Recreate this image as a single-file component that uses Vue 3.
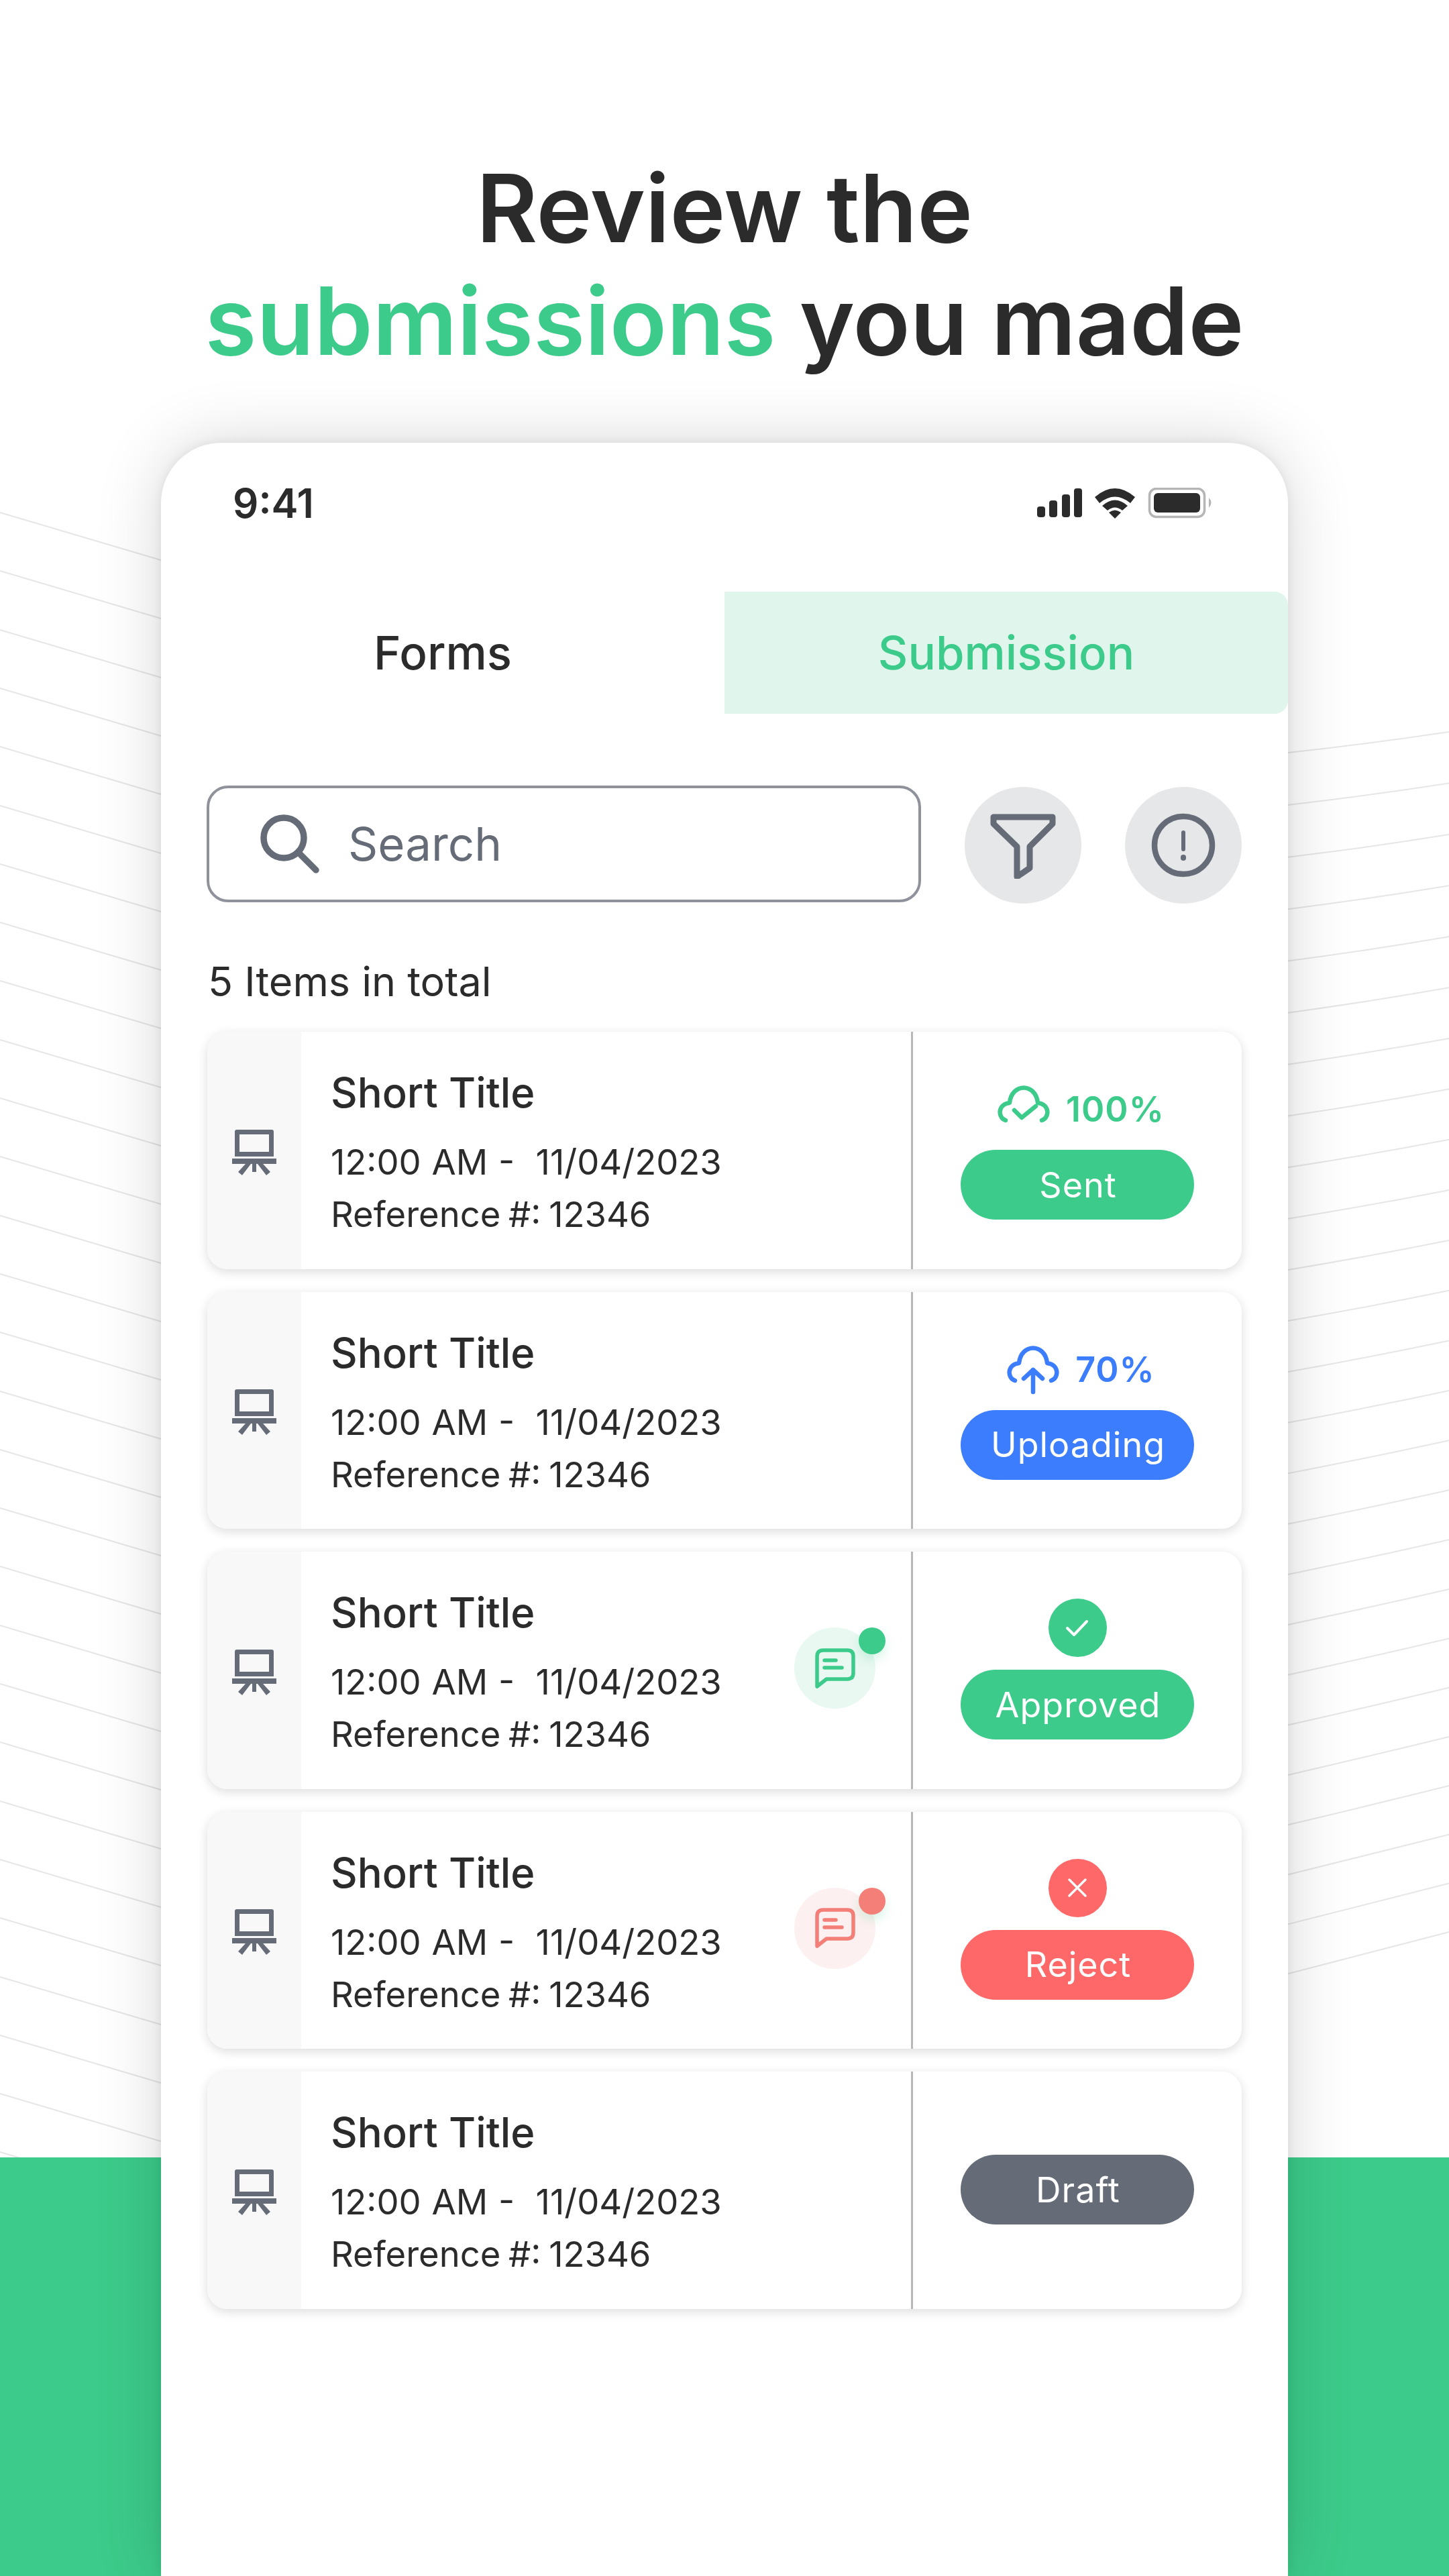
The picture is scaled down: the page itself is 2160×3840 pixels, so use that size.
<template>
  <div class="page">
    <svg class="bg-lines" width="2160" height="3216" viewBox="0 0 2160 3216">
      <line v-for="y in leftLines" :key="'l' + y" x1="0" :y1="y" x2="240" :y2="y + 71" />
      <path v-for="(d, i) in rightLines" :key="'r' + i" :d="d" />
    </svg>
    <div class="green-band"></div>

    <h1 class="headline">
      Review the<br />
      <span class="accent">submissions</span> you made
    </h1>

    <div class="phone">
      <div class="status-bar">
        <span class="clock">9:41</span>
        <svg class="status-icons" width="262" height="46" viewBox="0 0 262 46">
          <rect x="0" y="28" width="12" height="16" rx="4" fill="#2b2b2b" />
          <rect x="18" y="19" width="12" height="25" rx="4" fill="#2b2b2b" />
          <rect x="37" y="10" width="12" height="34" rx="4" fill="#2b2b2b" />
          <rect x="55" y="1" width="12" height="43" rx="4" fill="#2b2b2b" />
          <path d="M86 14 Q116 -12 146 14 L139 23 Q116 4 93 23 Z" fill="#2b2b2b" />
          <path d="M97 27 Q116 10 135 27 L127 34 Q116 25 105 34 Z" fill="#2b2b2b" />
          <path d="M107 37 Q116 30 125 37 L116 46 Z" fill="#2b2b2b" />
          <rect x="167.500" y="1.500" width="82" height="42" rx="10" fill="none" stroke="#b5b5b5" stroke-width="3.500" />
          <rect x="174" y="8" width="69" height="29" rx="6" fill="#2b2b2b" />
          <path d="M256 15 Q263 22 256 30 Z" fill="#b5b5b5" />
        </svg>
      </div>

      <div class="tabs">
        <div class="tab">Forms</div>
        <div class="tab active">Submission</div>
      </div>

      <div class="toolbar">
        <div class="search">
          <svg width="88" height="88" viewBox="0 0 88 88" fill="none" stroke="#666b78" stroke-width="9.500" stroke-linecap="round">
            <circle cx="35" cy="35" r="30" />
            <line x1="57" y1="57" x2="83" y2="83" />
          </svg>
          <span>Search</span>
        </div>
        <div class="round-btn">
          <svg width="100" height="100" viewBox="0 0 100 100" fill="none" stroke="#666b78" stroke-width="9" stroke-linejoin="round">
            <path d="M6 8 H94 V18 L60 52 V84 L41 97 V52 L6 18 Z" />
          </svg>
        </div>
        <div class="round-btn">
          <svg width="100" height="100" viewBox="0 0 100 100" fill="none" stroke="#666b78" stroke-width="8.500" stroke-linecap="round">
            <circle cx="50" cy="50" r="43" />
            <line x1="50" y1="31" x2="50" y2="56" stroke-width="6" />
            <line x1="50" y1="68" x2="50" y2="69" stroke-width="8" />
          </svg>
        </div>
      </div>

      <p class="total">5 Items in total</p>

      <div class="list">
        <div v-for="item in items" :key="item.status" class="card">
          <div class="strip">
            <svg width="66" height="68" viewBox="0 0 66 68" fill="#666b78">
              <path fill-rule="evenodd" d="M7 0 H59 Q62 0 62 3 V40 H4 V3 Q4 0 7 0 Z M11 7 V33 H55 V7 Z" />
              <rect x="0" y="43" width="66" height="8" />
              <rect x="30" y="51" width="6" height="12" />
              <path d="M20 51 H28 L15 68 L9 63 Z" />
              <path d="M46 51 H38 L51 68 L57 63 Z" />
            </svg>
          </div>
          <div class="info">
            <div class="title">Short Title</div>
            <div class="meta">12:00 AM -&nbsp; 11/04/2023</div>
            <div class="meta ref">Reference #: 12346</div>
            <div v-if="item.chat" class="chat" :class="item.chat">
              <svg width="60" height="60" viewBox="0 0 60 60" fill="none" stroke="currentColor" stroke-width="5.500" stroke-linecap="round" stroke-linejoin="round">
                <path d="M3 12 Q3 3 12 3 H48 Q57 3 57 12 V37 Q57 46 48 46 H17 L3 57 Z" />
                <line x1="14" y1="18" x2="31" y2="18" />
                <line x1="14" y1="29" x2="40" y2="29" />
              </svg>
              <span class="chat-dot"></span>
            </div>
          </div>
          <div class="state">
            <div v-if="item.progress" class="progress" :class="item.kind">
              <svg v-if="item.kind === 'sent'" width="80" height="58" viewBox="0 0 80 58" fill="none" stroke="currentColor" stroke-width="6.500" stroke-linecap="round" stroke-linejoin="round">
                <path d="M13 53 C1 49 1 29 19 27 C22 -3 58 -3 61 27 C79 29 79 49 67 53" />
                <path d="M26 38 L37 49 L58 32" />
              </svg>
              <svg v-else width="80" height="74" viewBox="0 0 80 74" fill="none" stroke="currentColor" stroke-width="6.500" stroke-linecap="round" stroke-linejoin="round">
                <path d="M13 53 C1 49 1 29 19 27 C22 -3 58 -3 61 27 C79 29 79 49 67 53" />
                <path d="M40 70 V37 M26 50 L40 37 L54 50" />
              </svg>
              <span>{{ item.progress }}</span>
            </div>
            <div v-else-if="item.kind === 'approved'" class="mark approved">
              <svg width="36" height="30" viewBox="0 0 36 30" fill="none" stroke="#fff" stroke-width="4" stroke-linecap="round" stroke-linejoin="round">
                <path d="M3 15 L13 25 L32 5" />
              </svg>
            </div>
            <div v-else-if="item.kind === 'reject'" class="mark reject">
              <svg width="30" height="30" viewBox="0 0 30 30" fill="none" stroke="#fff" stroke-width="3.500" stroke-linecap="round">
                <path d="M3 3 L27 27 M27 3 L3 27" />
              </svg>
            </div>
            <div class="pill" :class="item.kind">{{ item.status }}</div>
          </div>
        </div>
      </div>
    </div>
  </div>
</template>

<script setup>
const items = [
  { status: "Sent", kind: "sent", progress: "100%" },
  { status: "Uploading", kind: "uploading", progress: "70%" },
  { status: "Approved", kind: "approved", chat: "green" },
  { status: "Reject", kind: "reject", chat: "red" },
  { status: "Draft", kind: "draft" },
];

// background hatching, left side is straight
const leftLines = [];
for (let i = 0; i < 30; i++) {
  leftLines.push(Math.round(764 + i * 87.3));
}

// right side lines get steeper and straighter going down
const rightLines = [];
for (let i = 0; i < 25; i++) {
  const y = 1122 + i * 78 - i * i * 0.09;
  const rise = 31 + i * 1.3;
  const mid = 0.42 + (i / 24) * 0.08;
  rightLines.push(`M1920 ${y} Q2040 ${y - rise * mid} 2160 ${y - rise}`);
}
</script>

<style scoped>
.page {
  position: relative;
  width: 2160px;
  height: 3840px;
  overflow: hidden;
  background: #fff;
  font-family: Inter, "Liberation Sans", sans-serif;
  color: #2b2b2b;
}

.bg-lines {
  position: absolute;
  left: 0;
  top: 0;
}

.bg-lines line,
.bg-lines path {
  stroke: #e6e6e6;
  stroke-width: 2;
  fill: none;
}

.green-band {
  position: absolute;
  left: 0;
  right: 0;
  top: 3216px;
  bottom: 0;
  background: #3ccb8a;
}

.headline {
  position: relative;
  margin: 0;
  padding-top: 226px;
  height: 434px;
  box-sizing: border-box;
  text-align: center;
  font-size: 140px;
  line-height: 168px;
  font-weight: 600;
}

.accent {
  color: #3ccb8a;
}

/* === Phone === */
.phone {
  position: relative;
  width: 1680px;
  height: 3180px;
  margin: 226px 0 0 240px;
  background: #fff;
  border-radius: 90px 90px 0 0;
  box-shadow: 0 0 100px rgba(0, 0, 0, 0.16), 0 0 16px rgba(0, 0, 0, 0.08);
}

.status-bar {
  display: flex;
  justify-content: space-between;
  align-items: center;
  height: 222px;
  box-sizing: border-box;
  padding: 0 112px 42px 107px;
}

.clock {
  font-size: 60px;
  font-weight: 600;
}

.status-icons {
  display: block;
}

.tabs {
  display: flex;
  height: 182px;
}

.tab {
  flex: 1;
  display: flex;
  align-items: center;
  justify-content: center;
  font-size: 69px;
  font-weight: 500;
}

.tab.active {
  background: #e0f6ec;
  color: #3ccb8a;
  border-radius: 0 20px 20px 0;
}

/* === Search === */
.toolbar {
  display: flex;
  align-items: flex-start;
  margin-top: 107px;
  padding: 0 69px 0 68px;
}

.search {
  flex: none;
  display: flex;
  align-items: center;
  gap: 43px;
  width: 1065px;
  height: 174px;
  box-sizing: border-box;
  padding-left: 76px;
  border: 4px solid #8f929b;
  border-radius: 32px;
  font-size: 69px;
  color: #666b78;
}

.round-btn {
  flex: none;
  display: flex;
  align-items: center;
  justify-content: center;
  width: 174px;
  height: 174px;
  margin: 2px 0 0 65px;
  border-radius: 50%;
  background: #e6e7e9;
}

.total {
  margin: 79px 0 0 70px;
  font-size: 61px;
  line-height: 74px;
}

/* === Cards === */
.list {
  display: flex;
  flex-direction: column;
  gap: 34px;
  margin: 38px 69px 0 69px;
}

.card {
  display: flex;
  height: 353.5px;
  background: #fff;
  border-radius: 30px;
  box-shadow: 0 4px 16px rgba(0, 0, 0, 0.14);
  overflow: hidden;
}

.strip {
  flex: none;
  width: 140px;
  padding-top: 6px;
  display: flex;
  align-items: center;
  justify-content: center;
  background: #f8f8f9;
}

.info {
  position: relative;
  flex: 1;
  padding: 55px 0 0 44px;
}

.title {
  font-size: 61.5px;
  font-weight: 500;
  line-height: 72px;
  margin-bottom: 28px;
}

.meta {
  font-size: 52.5px;
  line-height: 78px;
  word-spacing: 1px;
}

.meta.ref {
  word-spacing: -3px;
}

.chat {
  position: absolute;
  left: 735px;
  top: 113px;
  width: 121px;
  height: 121px;
  border-radius: 50%;
  display: flex;
  align-items: center;
  justify-content: center;
}

.chat.green {
  background: #e9f8f1;
  color: #3ccb8a;
}

.chat.red {
  background: #fdf0f0;
  color: #f47e78;
}

.chat-dot {
  position: absolute;
  top: 0;
  right: -15px;
  width: 40px;
  height: 40px;
  border-radius: 50%;
  background: currentColor;
  box-shadow: 0 8px 16px rgba(60, 203, 138, 0.2);
}

.state {
  flex: none;
  width: 493px;
  box-sizing: border-box;
  border-left: 3px solid #b8b8b8;
  display: flex;
  flex-direction: column;
  align-items: center;
  position: relative;
  padding-top: 176px;
}

.progress {
  position: absolute;
  top: 79px;
  height: 58px;
  margin-left: 10px;
  display: flex;
  align-items: flex-start;
  gap: 23px;
  font-size: 52px;
  line-height: 62px;
  font-weight: 600;
  letter-spacing: 1px;
}

.progress span {
  padding-top: 6px;
}

.progress svg {
  flex: none;
}

.progress.sent {
  color: #3ccb8a;
}

.progress.uploading {
  color: #3b7dfc;
}

.mark {
  position: absolute;
  top: 70px;
  width: 87px;
  height: 87px;
  border-radius: 50%;
  display: flex;
  align-items: center;
  justify-content: center;
}

.mark.approved {
  background: #3ccb8a;
}

.mark.reject {
  background: #ff6868;
}

.pill {
  width: 348px;
  height: 104px;
  box-sizing: border-box;
  padding-left: 2px;
  border-radius: 52px;
  display: flex;
  align-items: center;
  justify-content: center;
  font-size: 52px;
  letter-spacing: 1px;
  color: #fff;
}

.pill.sent,
.pill.approved {
  background: #3ccb8a;
}

.pill.uploading {
  background: #3b7dfc;
}

.pill.reject {
  background: #ff6868;
}

.pill.draft {
  background: #666b78;
  margin-top: -52px;
}
</style>
